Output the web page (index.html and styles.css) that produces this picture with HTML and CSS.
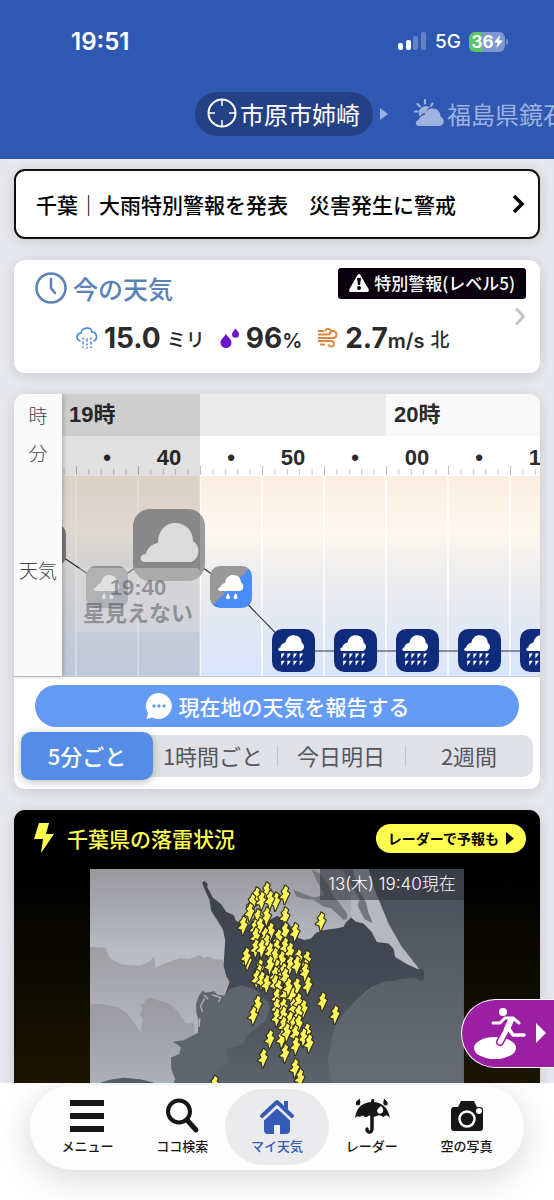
FILE: index.html
```html
<!DOCTYPE html>
<html lang="ja">
<head>
    <meta charset="UTF-8">
    <meta name="viewport" content="width=device-width, initial-scale=1.0">
    <title>マイ天気</title>
    <link rel="stylesheet" href="styles.css">
</head>
<body>
    <!-- shared weather icons -->
    <svg class="defs" width="0" height="0" aria-hidden="true">
        <defs>
            <linearGradient id="split" x1="0" y1="0" x2="1" y2="1">
                <stop offset="0.5" stop-color="#999"/>
                <stop offset="0.5" stop-color="#4a8cf5"/>
            </linearGradient>
            <symbol id="heavy" viewBox="0 0 42 42">
                <rect width="42" height="42" rx="10" fill="#0f2b7c"/>
                <path fill="#fff" d="M8 21.500c-2.500 0-2.500-3 0-3.500.5-2.500 2.500-4 5-4.500C14 8.500 17 6 21 6c5 0 8 3 8 7.500 3.500 2 3 7-1 8z" />
                <path fill="#fff" d="M9 24h3.500l-3.500 5zM15 24h3.500l-3.500 5zM21 24h3.500l-3.500 5zM27 24h3.500l-3.500 5zM9 31h3.500l-3.500 5zM15 31h3.500l-3.500 5zM21 31h3.500l-3.500 5zM27 31h3.500l-3.500 5z"/>
            </symbol>
            <symbol id="light" viewBox="0 0 42 42">
                <path fill="#fff" d="M10 25c-2.500 0-2.500-3 0-3.500 1-2.500 3-4 5-4.500C16 11.500 19 9 23 9c5 0 8 3 8 7.500 3.500 2 3 7.500-1 8.500z"/>
                <path fill="#fff" d="M18 27c1.500 2.500 2 3.200 2 4.200a2 2 0 0 1-4 0c0-1 .5-1.700 2-4.200zm7.500 0c1.500 2.500 2 3.200 2 4.200a2 2 0 0 1-4 0c0-1 .5-1.700 2-4.200z"/>
            </symbol>
            <path id="bolt" d="M1-27L10-20 6-10 14-4 9 5 5 14-1 28-4 12-15 8-4-2-9-11-2-18z"/>
        </defs>
    </svg>

    <div class="app">
        <header class="header">
            <div class="status-bar">
                <span class="clock">19:51</span>
                <span class="status-right">
                    <svg width="29" height="19" viewBox="0 0 29 19" fill="#fff">
                        <rect x="0" y="11" width="5" height="7" rx="2"/>
                        <rect x="8" y="8" width="5" height="10" rx="2"/>
                        <rect x="15" y="4" width="5" height="14" rx="2" opacity=".25"/>
                        <rect x="23" y="0" width="5" height="18" rx="2" opacity=".25"/>
                    </svg>
                    <span class="network">5G</span>
                    <span class="battery">36<svg width="9" height="13" viewBox="0 0 9 13"><path fill="#fff" d="M6 0L0 7.500h3.500L2.500 13 9 5.500H5z"/></svg></span>
                </span>
            </div>
            <nav class="places">
                <a class="place current" href="#">
                    <svg width="30" height="30" viewBox="0 0 30 30" fill="none" stroke="#fff" stroke-width="2"><circle cx="15" cy="15" r="13.500"/><path stroke-width="1.500" d="M15 1v7M15 22v7M1 15h7M22 15h7"/></svg>
                    <span>市原市姉崎</span>
                </a>
                <svg class="next" width="8" height="12" viewBox="0 0 8 12"><path fill="#9db2e0" d="M0 0l8 6-8 6z"/></svg>
                <a class="place" href="#">
                    <svg width="30" height="28" viewBox="0 0 30 28" fill="#9eb2df"><path d="M5.500 17A7 7 0 0 1 16 8.500c-2 1-3.500 2.500-4 5-3 .5-4.500 1.500-5.500 3.500z"/><path stroke="#9eb2df" stroke-width="2.200" stroke-linecap="round" d="M11 1v3.500M3.500 5l2.500 2.500M18.500 4.500L17 7M1 12.500h2.500"/><path d="M5 27c-4 0-4.500-5-.5-6 1-3 3-4.500 6-5 1-4 4-6.500 8-6.500 5 0 8 3.500 8 8 5 3 4 8.500-1 9.500z"/></svg>
                    <span>福島県鏡石</span>
                </a>
            </nav>
        </header>

        <main class="content">
            <a class="card alert" href="#">
                <span>千葉｜大雨特別警報を発表　災害発生に警戒</span>
                <svg width="13" height="20" viewBox="0 0 13 20" fill="none" stroke="#000" stroke-width="3.500"><path d="M2 2l8 8-8 8"/></svg>
            </a>

            <section class="card now">
                <div class="now-head">
                    <svg width="32" height="32" viewBox="0 0 32 32" fill="none" stroke="#5b82b8" stroke-width="2.500"><circle cx="16" cy="16" r="14.500"/><path stroke-linecap="round" d="M16 7v9l4 5"/></svg>
                    <h2>今の天気</h2>
                    <a class="badge" href="#">
                        <svg width="20" height="18" viewBox="0 0 20 18"><path fill="#fff" d="M8.500 1q1.500-2 3 0l8 14q1 3-1.500 3H2q-2.500 0-1.500-3z"/><path fill="#000" d="M8 4h4l-1 7H9z"/><circle cx="10" cy="14" r="2"/></svg>
                        特別警報(レベル5)
                    </a>
                </div>
                <div class="now-values">
                    <span class="value">
                        <svg width="22" height="22" viewBox="0 0 22 22" fill="none" stroke="#4c84e0" stroke-width="1.600" stroke-linecap="round"><path d="M4 14C-1 12 1 6 5 6c1-6 10-7 11-1 5 0 6 7 2 9"/><path d="M7 11v1M11 12v2M15 11v1M7 15v2M11 17v1M15 15v2M11 20.500v.5M7 20v.5M15 20v.5"/></svg>
                        <b>15.0</b><small>ミリ</small>
                    </span>
                    <span class="value">
                        <svg width="20" height="20" viewBox="0 0 20 20" fill="#6a14cc"><path d="M6 6c3 4 5.500 6 5.500 8.500a5.500 5.500 0 0 1-11 0C.5 12 3 10 6 6zM15.500.5c2 2.500 3.500 4 3.500 5.700a3.500 3.500 0 0 1-7 0c0-1.700 1.500-3.200 3.500-5.700z"/></svg>
                        <b>96<i>%</i></b>
                    </span>
                    <span class="value">
                        <svg width="22" height="20" viewBox="0 0 22 20" fill="none" stroke="#d9873a" stroke-width="1.800"><path d="M1 3h6M1 6.500h10a2.800 2.800 0 1 0-2.800-3M1 10h15a3.500 3.500 0 1 0-3.500-4M1 13h13a2.800 2.800 0 1 1-2.500 3.500M3 16.500h5"/></svg>
                        <b>2.7<i>m/s</i></b><small>北</small>
                    </span>
                    <svg class="more" width="12" height="19" viewBox="0 0 12 19" fill="none" stroke="#c4c4c4" stroke-width="3"><path d="M2 1.500l7.500 8-7.500 8"/></svg>
                </div>
            </section>

            <section class="card forecast">
                <div class="timeline">
                    <div class="labels">
                        <span class="label-hour">時</span>
                        <span class="label-minute">分</span>
                        <span class="label-weather">天気</span>
                    </div>
                    <div class="scroller">
                        <div class="strip">
                            <div class="hours">
                                <span class="hour first">19時</span>
                                <span class="hour second">20時</span>
                            </div>
                            <div class="minutes">
                                <span></span><span>•</span><span>40</span><span>•</span><span>50</span><span>•</span><span>00</span><span>•</span><span>10</span>
                            </div>
                            <div class="plot">
                                <svg width="558" height="200" viewBox="0 0 558 200">
                                    <path stroke="#fff" stroke-opacity=".7" stroke-width="2" d="M62 0v200M124 0v200M186 0v200M248 0v200M310 0v200M372 0v200M434 0v200M496 0v200"/>
                                    <path fill="none" stroke="#333" stroke-width="1.200" d="M31 69L93 111L155 69L217 111L279 175H558"/>
                                    <rect x="10" y="48" width="42" height="42" rx="10" fill="#8b8b8b"/>
                                    <rect x="72" y="90" width="42" height="42" rx="10" fill="url(#split)"/>
                                    <rect x="72" y="90" width="42" height="42" rx="10" fill="#aaa" opacity=".88"/>
                                    <use href="#light" x="72" y="90" width="42" height="42"/>
                                    <rect x="119" y="33" width="72" height="72" rx="17" fill="#9b9b9b"/>
                                    <path fill="#fafafa" d="M131 86c-6 0-6-8 1-8 1-6 6-10 12-11 0-12 7-20 17-20 11 0 18 8 18 18 8 5 7 18-2 21z"/>
                                    <rect x="196" y="90" width="42" height="42" rx="10" fill="url(#split)"/>
                                    <use href="#light" x="196" y="90" width="42" height="42"/>
                                    <use href="#heavy" x="258" y="153" width="43" height="43"/>
                                    <use href="#heavy" x="320" y="153" width="43" height="43"/>
                                    <use href="#heavy" x="382" y="153" width="43" height="43"/>
                                    <use href="#heavy" x="444" y="153" width="43" height="43"/>
                                    <use href="#heavy" x="506" y="153" width="43" height="43"/>
                                </svg>
                            </div>
                            <div class="past"></div>
                            <div class="callout"><span>19:40</span><span>星見えない</span></div>
                        </div>
                    </div>
                </div>
                <button class="report" type="button">
                    <svg width="28" height="28" viewBox="0 0 28 28"><path fill="#fff" d="M14 1a13.500 13 0 1 1-7 24.500L1.500 27l1.500-6A13.500 13 0 0 1 14 1z"/><g fill="#639bf5"><circle cx="9" cy="14" r="1.700"/><circle cx="14" cy="14" r="1.700"/><circle cx="19" cy="14" r="1.700"/></g></svg>
                    現在地の天気を報告する
                </button>
                <div class="tabs">
                    <button class="tab active" type="button">5分ごと</button>
                    <button class="tab" type="button">1時間ごと</button>
                    <button class="tab" type="button">今日明日</button>
                    <button class="tab" type="button">2週間</button>
                </div>
            </section>

            <section class="card thunder">
                <div class="thunder-head">
                    <svg width="20" height="30" viewBox="0 0 20 30"><path fill="#ffff50" d="M5 0h10l-3 11h8L7 30l2-14H0z"/></svg>
                    <h2>千葉県の落雷状況</h2>
                    <a class="radar-link" href="#">レーダーで予報も<svg width="8" height="13" viewBox="0 0 8 13"><path d="M0 0l8 6.500L0 13z"/></svg></a>
                </div>
                <div class="map">
                    <svg viewBox="0 0 1116 642">
                        <defs>
                            <linearGradient id="g1" x2="0" y2="1"><stop stop-color="#99999e"/><stop offset=".4" stop-color="#b9bdc6"/></linearGradient>
                            <linearGradient id="g2" gradientUnits="userSpaceOnUse" x1="0" y1="230" x2="0" y2="500"><stop stop-color="#9e9ea2"/><stop offset="1" stop-color="#b5b8c1"/></linearGradient>
                            <linearGradient id="g3" gradientUnits="userSpaceOnUse" x1="0" y1="385" x2="0" y2="642"><stop stop-color="#99999e"/><stop offset="1" stop-color="#acb0b9"/></linearGradient>
                            <linearGradient id="land" gradientUnits="userSpaceOnUse" x1="0" y1="60" x2="0" y2="642"><stop stop-color="#3c424d"/><stop offset=".5" stop-color="#464c57"/><stop offset="1" stop-color="#5e646d"/></linearGradient>
                            <linearGradient id="sea" gradientUnits="userSpaceOnUse" x1="0" y1="0" x2="0" y2="642"><stop stop-color="#474d59"/><stop offset=".6" stop-color="#5d636c"/><stop offset="1" stop-color="#666b73"/></linearGradient>
                        </defs>
                        <rect width="1116" height="642" fill="url(#g1)"/>
                        <path fill="url(#g2)" d="M0 233L47 235 55 258 62 268 92 285 120 288 152 289 175 278 192 263 195 295 220 283 247 273 270 266 297 268 327 258 340 266 352 262 375 270 397 271 400 300 417 335 400 378 320 480 320 642 0 642z"/>
                        <path fill="url(#g3)" d="M0 405L25 403 57 407 85 415 107 428 130 455 145 478 152 488 157 450 150 435 157 413 139 401 157 407 165 392 179 385 205 393 237 403 262 425 287 461 312 458 312 483 325 642 0 642z"/>
                        <path fill="#555b65" d="M20 642L60 630 100 624 150 628 190 638 190 642z"/>
                        <path fill="#b5b8c1" d="M780 0L833 0 892 163 985 305 960 320 780 200z"/>
                        <path fill="url(#sea)" d="M833 0L848 55 892 163 930 230 985 300 890 320 690 480 690 642 1116 642 1116 0z"/>
                        <path fill="#747781" d="M607 62L617 82 640 90 667 92 697 112 720 117 742 137 757 152 767 150 769 135 742 97 725 77 712 47 690 15 662 0 680 40 702 77 670 85 640 75z"/>
                        <path fill="#747781" d="M757 8L787 60 805 90 800 110 820 150 845 162 832 130 825 100 810 75 795 40 785 0 757 0z"/>
                        <path fill="url(#land)" d="M342 36L352 45 350 53 367 85 392 105 407 128 430 138 435 153 467 172 490 150 540 150 560 140 590 160 615 187 620 205 640 212 660 208 677 190 700 182 735 178 757 173 765 160 775 150 780 145 795 158 817 163 842 188 857 218 892 223 907 238 912 263 945 283 977 298 997 300 998 325 993 336 967 325 935 328 907 335 877 338 840 355 807 383 757 433 735 465 722 510 712 563 715 610 727 642 340 642 380 600 420 400 402 378 417 338 407 320 399 290 404 213 397 180 375 145 362 125 357 93 342 60 335 40z"/>
                        <path fill="url(#sea)" d="M877 338L840 355 807 383 757 433 735 465 722 510 712 563 715 610 727 642 900 642 960 400 967 327 907 335z"/>
                        <path fill="#5f656f" d="M402 378L417 358 452 348 487 358 505 370 512 383 530 395 537 413 533 430 527 448 505 470 487 483 467 500 460 518 440 530 417 533 407 545 407 558 414 570 412 583 390 590 382 613 372 625 352 642 248 642 255 628 243 600 242 563 267 553 272 533 262 525 247 516 280 512 297 503 322 490 325 455 318 430 317 403 325 380 337 363 345 370 372 365 380 375z"/>
                        <path fill="none" stroke="#aeb1ba" stroke-width="4" stroke-linecap="round" d="M342 378L352 388M342 388L330 410 336 425M366 376L390 384 385 396M328 448L326 470"/>
                        <g id="bolts" fill="#fff75a" stroke="#33301c" stroke-width="7" stroke-linejoin="round" paint-order="stroke"></g>
                    </svg>
                    <span class="map-time">13(木) 19:40現在</span>
                </div>
            </section>
        </main>

        <a class="shelter" href="#" aria-label="避難">
            <svg width="78" height="54" viewBox="0 0 78 54">
                <ellipse cx="21" cy="41" rx="21" ry="11" fill="#fff"/>
                <path stroke="#9a1fa3" stroke-width="8" stroke-linecap="round" d="M26 35l4-7"/>
                <circle cx="29" cy="5" r="4" fill="#fff"/>
                <g fill="none" stroke="#fff" stroke-linecap="round" stroke-linejoin="round">
                    <path stroke-width="3" d="M19 16h7l5-5h8l6 5"/>
                    <path stroke-width="6" d="M37 13l-4 9"/>
                    <path stroke-width="5" d="M33 22l-7 13"/>
                    <path stroke-width="3.500" d="M35 22l4 6h11"/>
                </g>
                <path fill="#fff" d="M62 16l10 10-10 10z"/>
            </svg>
        </a>

        <footer class="bottom">
            <nav class="menu">
                <a class="item" href="#">
                    <svg width="36" height="36" viewBox="0 0 36 36" fill="#161616"><path d="M1 2h34v6H1zM1 15h34v6H1zM1 28h34v6H1z"/></svg>
                    <span>メニュー</span>
                </a>
                <a class="item" href="#">
                    <svg width="36" height="36" viewBox="0 0 36 36" fill="none" stroke="#161616"><circle cx="15" cy="13.500" r="11" stroke-width="4"/><path stroke-width="5" stroke-linecap="round" d="M23 22l9 10"/></svg>
                    <span>ココ検索</span>
                </a>
                <a class="item selected" href="#">
                    <svg width="36" height="36" viewBox="0 0 36 36"><path fill="#345cb6" d="M18 10l13 11v11q0 4-4 4h-6v-9h-6v9H9q-4 0-4-4V21zM25 3h4v9l-4-4z"/><path fill="none" stroke="#345cb6" stroke-width="4" stroke-linecap="round" stroke-linejoin="round" d="M3 18L18 4l15 14"/><path fill="none" stroke="#ebebed" stroke-width="2" d="M4 22L18 9l14 13"/></svg>
                    <span>マイ天気</span>
                </a>
                <a class="item" href="#">
                    <svg width="36" height="36" viewBox="0 0 36 36" fill="#161616"><path d="M1 20Q3 5 17 4q0-3 2-3t1 3q13 1 16 16-3-4-5-2l-2 1q-3-3-6-1l-4 1q-4-3-6 0l-2 0q-3-3-5 0-3-2-5 1z"/><path fill="none" stroke="#161616" stroke-width="3.500" stroke-linecap="round" d="M18 17v14q-.5 3.500-3 3-2-.5-2-3"/><path stroke="#fdfdfd" d="M6 0l1 4q0 4-3 4-4-1-2-5zM30 0l4 4q1 4-2 4-4 0-3-5z"/><path fill="#fff" d="M27 8q4 4 1 7-4 2-5-2 0-2 4-5z"/></svg>
                    <span>レーダー</span>
                </a>
                <a class="item" href="#">
                    <svg width="36" height="36" viewBox="0 0 36 36" fill="#161616"><path d="M5 9h4l3-6h13l3 6h3q3 0 3 3v18q0 3-3 3H5q-3 0-3-3V12q0-3 3-3z"/><circle cx="18" cy="21" r="7.500" fill="none" stroke="#fff" stroke-width="2.500"/><circle cx="30" cy="13" r="3" fill="#fff"/></svg>
                    <span>空の写真</span>
                </a>
            </nav>
        </footer>
    </div>

    <script>
        // lightning strikes on the map, [x, y]
        const strikes = [
            [457,169],[527,67],[497,82],[484,102],[512,95],[554,97],[582,77],[537,92],[477,129],[500,147],
            [527,142],[582,142],[492,177],[507,172],[539,187],[494,202],[582,187],[612,189],[522,202],[562,207],
            [494,237],[527,222],[512,237],[557,237],[582,232],[470,275],[466,262],[537,247],[552,262],[597,247],
            [572,272],[597,287],[622,267],[647,272],[617,287],[642,297],[507,297],[504,312],[557,297],[537,287],
            [562,317],[690,157],[497,328],[512,333],[527,343],[552,318],[577,308],[552,343],[582,323],[562,358],
            [617,353],[650,348],[642,308],[557,383],[582,373],[602,378],[592,353],[500,405],[487,438],[694,396],
            [732,435],[557,413],[577,413],[607,413],[622,398],[637,418],[557,443],[577,438],[597,453],[622,433],
            [577,468],[607,468],[622,463],[537,508],[572,508],[587,488],[612,493],[647,488],[637,503],[654,521],
            [582,551],[614,528],[517,565],[612,595],[627,625],[372,645]
        ];
        const svgNs = 'http://www.w3.org/2000/svg';
        const group = document.getElementById('bolts');
        strikes.forEach(([x, y]) => {
            const use = document.createElementNS(svgNs, 'use');
            use.setAttribute('href', '#bolt');
            use.setAttribute('x', x);
            use.setAttribute('y', y);
            group.appendChild(use);
        });
    </script>
</body>
</html>
```

FILE: styles.css
```css
* {
    box-sizing: border-box;
}
body {
    margin: 0;
    background-color: #e6e8ed;
    color: #2b2b2b;
    font-family: "Liberation Sans", "Noto Sans CJK JP", sans-serif;
}
a {
    color: inherit;
    text-decoration: none;
}
h2 {
    margin: 0;
}
svg {
    display: block;
    flex: none;
}
button {
    border: none;
    font-family: inherit;
    cursor: pointer;
}
.defs {
    position: absolute;
}
.app {
    position: relative;
    display: flex;
    flex-direction: column;
    height: 100vh;
    overflow: hidden;
}

/* header */
.header {
    flex: none;
    padding-bottom: 23px;
    background-color: #2f58b3;
    color: white;
    overflow: hidden;
}
.status-bar {
    display: flex;
    align-items: center;
    justify-content: space-between;
    height: 92px;
    padding: 0 49px 9px 71px;
    font-family: Inter, sans-serif;
}
.clock {
    font-size: 24px;
    font-weight: 600;
}
.status-right {
    display: flex;
    align-items: center;
    gap: 8px;
}
.network {
    font-size: 19px;
    font-weight: 500;
}
.battery {
    position: relative;
    display: flex;
    align-items: center;
    justify-content: center;
    width: 36px;
    height: 20px;
    border-radius: 6px;
    background: linear-gradient(90deg, #5fc465 36%, #7d97d0 36%);
    font-size: 17px;
    font-weight: 700;
}
.battery::after {
    content: "";
    position: absolute;
    top: 7px;
    right: -3px;
    width: 2px;
    height: 6px;
    border-radius: 0 2px 2px 0;
    background-color: #7d97d0;
}
.places {
    display: flex;
    align-items: center;
    padding-left: 195px;
    white-space: nowrap;
}
.place {
    display: flex;
    align-items: center;
    gap: 3px;
    height: 44px;
    padding-bottom: 2px;
    font-family: "Noto Sans CJK JP", sans-serif;
    font-size: 24px;
    color: #9eb2df;
}
.place.current {
    padding: 0 13px 2px 12px;
    border-radius: 22px;
    background-color: #234184;
    color: white;
}
.next {
    margin: 0 26px 0 7px;
}

/* cards */
.content {
    flex: 1;
    min-height: 0;
    display: flex;
    flex-direction: column;
    gap: 21px;
    padding: 10px 14px 0;
    overflow: hidden;
}
.card {
    flex: none;
    border-radius: 11px;
    background-color: white;
    box-shadow: 0 2px 14px rgba(0, 0, 0, 0.14);
}
.alert {
    display: flex;
    align-items: center;
    justify-content: space-between;
    height: 70px;
    padding: 0 13px 0 20px;
    border: 2px solid #111;
    font-family: "Noto Sans CJK JP", sans-serif;
    font-size: 21px;
    font-weight: 500;
    color: black;
}
.now {
    height: 113px;
    padding: 8px 14px 0 21px;
}
.now-head {
    display: flex;
    align-items: center;
    gap: 6px;
    height: 40px;
}
.now-head h2 {
    font-family: "Noto Sans CJK JP", sans-serif;
    font-size: 25px;
    font-weight: 500;
    color: #5b82b8;
}
.badge {
    display: flex;
    align-items: center;
    gap: 5px;
    height: 31px;
    margin: 0 0 9px auto;
    padding: 0 11px 2px;
    border-radius: 3px;
    background-color: #08000c;
    color: white;
    font-family: "Noto Sans CJK JP", sans-serif;
    font-size: 17px;
    font-weight: 500;
}
.now-values {
    display: flex;
    align-items: center;
    gap: 15px;
    height: 60px;
    padding-left: 41px;
    font-family: Inter, "Noto Sans CJK JP", sans-serif;
}
.value {
    display: flex;
    align-items: center;
    gap: 6px;
}
.value b {
    font-size: 28px;
}
.value i {
    font-size: 20px;
    font-style: normal;
    font-weight: 600;
}
.value small {
    font-size: 19px;
    font-weight: 500;
}
.more {
    margin: 0 0 44px auto;
}

/* forecast */
.forecast {
    overflow: hidden;
    padding-bottom: 12px;
}
.timeline {
    display: flex;
    height: 283px;
    border-bottom: 1px solid #c6cad3;
}
.labels {
    flex: none;
    position: relative;
    z-index: 1;
    width: 48px;
    display: flex;
    flex-direction: column;
    text-align: center;
    background-color: #fafafa;
    box-shadow: 1px 0 5px rgba(0, 0, 0, 0.25);
    font-family: "Noto Sans CJK JP", sans-serif;
    font-size: 19px;
    font-weight: 300;
    color: #444;
}
.label-hour {
    line-height: 42px;
}
.label-minute {
    line-height: 34px;
}
.label-weather {
    line-height: 200px;
}
.scroller {
    flex: 1;
    min-width: 0;
    overflow: hidden;
}
.strip {
    position: relative;
    width: 558px;
    margin-left: -48px;
}
.hours, .minutes {
    display: flex;
    font-weight: bold;
    font-size: 22px;
}
.hour {
    height: 42px;
    line-height: 42px;
}
.first {
    width: 372px;
    padding-left: 55px;
    background-color: #ebebeb;
}
.second {
    width: 186px;
    padding-left: 8px;
    background-color: #f9f9f9;
}
.minutes span {
    width: 62px;
    height: 40px;
    line-height: 44px;
    text-align: center;
    background: linear-gradient(#bbb, #bbb) left bottom 1px / 1px 9px no-repeat,
        linear-gradient(90deg, #c4c4c4 1px, transparent 1px) left bottom 1px / 20% 6px repeat-x;
}
.plot {
    height: 200px;
    background: linear-gradient(#fbeee0, #fdf7ee 27%, #ececee 52%, #e4e8f2 70%, #d9e5fc);
}
.past {
    position: absolute;
    top: 0;
    left: 0;
    width: 186px;
    height: 282px;
    background-color: rgba(0, 0, 0, 0.12);
}
.callout {
    position: absolute;
    top: 174px;
    left: 62px;
    width: 124px;
    height: 64px;
    display: flex;
    flex-direction: column;
    align-items: center;
    padding-top: 7px;
    border-radius: 4px;
    background-color: rgba(225, 225, 225, 0.4);
    font-size: 22px;
    line-height: 26px;
    font-weight: bold;
    white-space: nowrap;
    color: rgba(60, 60, 60, 0.45);
}
.report {
    display: flex;
    align-items: center;
    justify-content: center;
    gap: 6px;
    width: calc(100% - 42px);
    height: 42px;
    margin: 8px 21px;
    padding: 0;
    border-radius: 21px;
    background-color: #639bf5;
    color: white;
    font-family: "Noto Sans CJK JP", sans-serif;
    font-size: 21px;
    font-weight: 500;
}
.tabs {
    display: grid;
    grid-template-columns: repeat(4, 1fr);
    height: 42px;
    margin: 0 7px;
    border-radius: 10px;
    background-color: #dfe1e6;
}
.tab {
    position: relative;
    padding: 0 0 2px;
    background: none;
    color: #55575c;
    font-family: "Noto Sans CJK JP", sans-serif;
    font-size: 22px;
    white-space: nowrap;
}
.tab + .tab + .tab {
    background: linear-gradient(#c3c5ca, #c3c5ca) left center / 1px 20px no-repeat;
}
.tab.active {
    margin: -3px -4px -3px 0;
    border-radius: 10px;
    background-color: #558ce5;
    box-shadow: 0 2px 8px rgba(0, 0, 0, 0.25);
    color: white;
    font-weight: 500;
}

/* lightning */
.thunder {
    padding-bottom: 30px;
    background: linear-gradient(black 60px, #1e1900);
}
.thunder-head {
    display: flex;
    align-items: center;
    gap: 13px;
    height: 59px;
    padding: 0 14px 3px 20px;
    color: #ffff50;
    font-family: "Noto Sans CJK JP", sans-serif;
}
.thunder-head h2 {
    font-size: 21px;
    font-weight: 500;
}
.radar-link {
    display: flex;
    align-items: center;
    gap: 7px;
    height: 29px;
    margin-left: auto;
    padding: 0 12px;
    border-radius: 15px;
    background-color: #ffff50;
    color: black;
    font-size: 14px;
    font-weight: 700;
}
.map {
    position: relative;
    width: 71%;
    margin: 0 auto;
}
.map > svg {
    width: 100%;
    height: auto;
}
.map-time {
    position: absolute;
    top: 0;
    right: 0;
    padding: 0 8px;
    background-color: rgba(50, 54, 61, 0.6);
    color: white;
    font-family: Inter, "Noto Sans CJK JP", sans-serif;
    font-size: 17px;
    font-weight: 300;
    line-height: 31px;
}

.shelter {
    position: absolute;
    right: 0;
    bottom: 132px;
    padding: 7px 2px 6px 12px;
    border: 1px solid white;
    border-right: none;
    border-radius: 35px 0 0 35px;
    background-color: #9a1fa3;
}

/* bottom menu */
.bottom {
    flex: none;
    height: 117px;
    padding: 2px 30px 0;
    background-color: white;
    overflow: hidden;
}
.menu {
    display: grid;
    grid-template-columns: repeat(5, 1fr);
    height: 85px;
    padding: 4px 10px 5px;
    border-radius: 42px;
    background-color: #fdfdfd;
    box-shadow: 0 8px 36px rgba(0, 0, 0, 0.16);
}
.item {
    display: flex;
    flex-direction: column;
    align-items: center;
    padding-top: 9px;
    border-radius: 38px;
    font-family: "Noto Sans CJK JP", sans-serif;
    font-size: 13px;
    font-weight: 500;
    line-height: 24px;
    color: #161616;
}
.selected {
    margin: 0 -5px;
    background-color: #ebebed;
    color: #345cb6;
}
```
